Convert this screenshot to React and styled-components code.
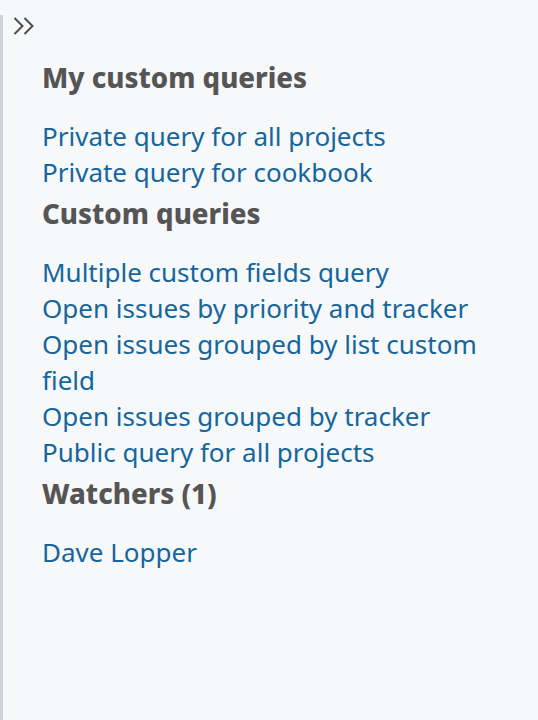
import React from "react";
import styled, { createGlobalStyle } from "styled-components";

const Global = createGlobalStyle`
  html, body { margin: 0; padding: 0; background: #f6f8fa; }
  body { font-family: "Noto Sans", "Open Sans", sans-serif; }
`;

const Sidebar = styled.aside`
  box-sizing: border-box;
  min-height: 100vh;
  border-left: 3px solid #cdd4dd;
  background: #f6f8fa;
  padding: 0 40px 40px 39px;
`;

const Toggle = styled.button`
  display: block;
  margin: 15px 0 0 -29px;
  padding: 0;
  border: 0;
  background: none;
  width: 22px;
  height: 22px;
  cursor: pointer;
`;

const Heading = styled.h3`
  margin: ${(p) => (p.$first ? "22px" : "5px")} 0 23px;
  font-size: 27.6px;
  line-height: 36px;
  font-weight: 800;
  color: #555;
`;

const List = styled.ul`
  list-style: none;
  margin: 0;
  padding: 0;
`;

const Item = styled.li`
  font-size: 26px;
  line-height: 36px;
`;

const Link = styled.a`
  color: #16669c;
  text-decoration: none;
`;

const sections = [
  {
    title: "My custom queries",
    links: ["Private query for all projects", "Private query for cookbook"],
  },
  {
    title: "Custom queries",
    links: [
      "Multiple custom fields query",
      "Open issues by priority and tracker",
      "Open issues grouped by list custom field",
      "Open issues grouped by tracker",
      "Public query for all projects",
    ],
  },
  { title: "Watchers (1)", links: ["Dave Lopper"] },
];

export default function App() {
  return (
    <>
      <Global />
      <Sidebar>
        <Toggle aria-label="Hide sidebar">
          <svg width="22" height="22" viewBox="0 0 22 22" fill="none">
            <path d="M1.5 3l8 8-8 8" stroke="#4d4d4d" strokeWidth="2" />
            <path d="M11.5 3l8 8-8 8" stroke="#4d4d4d" strokeWidth="2" />
          </svg>
        </Toggle>
        {sections.map((s, i) => (
          <section key={s.title}>
            <Heading $first={i === 0}>{s.title}</Heading>
            <List>
              {s.links.map((l) => (
                <Item key={l}>
                  <Link href="#">{l}</Link>
                </Item>
              ))}
            </List>
          </section>
        ))}
      </Sidebar>
    </>
  );
}
